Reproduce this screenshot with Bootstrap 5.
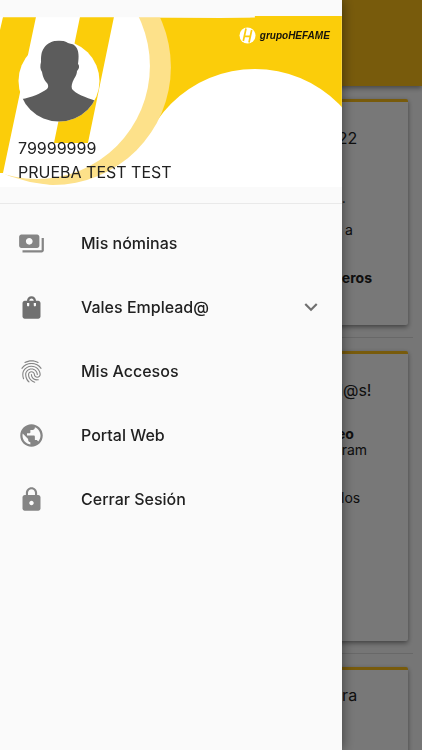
<!DOCTYPE html>
<html lang="es">
<head>
<meta charset="utf-8">
<meta name="viewport" content="width=device-width, initial-scale=1">
<title>grupoHEFAME</title>
<link href="https://cdn.jsdelivr.net/npm/bootstrap@5.3.0/dist/css/bootstrap.min.css" rel="stylesheet">
<style>
  body { font-family: Inter, "Liberation Sans", sans-serif; background: #f7f7f7; color: #212121; }
  .app-top { height: 86px; background: #fabe1b; box-shadow: 0 2px 5px rgba(0,0,0,.4); }
  .feed { padding: 13px 9px; }
  .feed hr { margin: 12px 0 13px; opacity: .14; }
  .news { margin: 0 5px; background: #fafafa; border: 0; border-top: 3px solid #fabe1b; border-radius: 2px; box-shadow: 0 2px 5px rgba(0,0,0,.45); }
  .news .card-body { padding: 24px 0 32px 81%; white-space: nowrap; font-size: 14px; line-height: 16px; }
  .news h2 { font-size: 16px; line-height: 24px; font-weight: 400; margin: 0; }
  .news p { margin: 0; }
  .news-a { min-height: 226px; }
  .news-b { min-height: 290px; }
  .news-c { min-height: 226px; }
  .news-c .card-body { padding-top: 13px; }
  .gap-a { padding-top: 40px; }
  .gap-b { padding-top: 16px; }
  .gap-c { padding-top: 32px; }
  .gap-d { padding-top: 24px; }
  .offcanvas-backdrop.show { opacity: .52; }
  .offcanvas.drawer { width: 81%; border: 0; background: #fafafa; color: #212121; box-shadow: 0 0 12px rgba(0,0,0,.5); }
  .banner { margin-top: 16px; padding: 24px 18px 3px; min-height: 171px; }
  .banner-art { width: 100%; height: 100%; }
  .banner-text { font-size: 16px; line-height: 24px; }
  .brand { font: italic bold 10px/16px "Liberation Sans", sans-serif; color: #17140a; margin: -13px -6px 0 0; gap: 4px; }
  .avatar { width: 82px; height: 82px; }
  .account { margin-top: 14px; }
  .drawer hr { margin: 16px 0 0; opacity: .08; }
  .menu { padding-top: 7px; }
  .menu-row { height: 64px; padding: 0 18px; gap: 36px; font-size: 16px; line-height: 24px; font-weight: 500; color: #212121; background: none; border: 0; text-align: left; }
  .menu-row .glyph { width: 27px; height: 27px; fill: #858585; flex: none; }
  .menu-row .dark { fill: #707070; }
  .menu-row .chev { width: 26px; height: 26px; fill: #707070; }
</style>
<script src="https://cdn.jsdelivr.net/npm/bootstrap@5.3.0/dist/js/bootstrap.bundle.min.js" defer></script>
</head>
<body>
<div class="vh-100 overflow-hidden">
<header class="app-top"></header>
<main class="feed">
  <article class="card news news-a">
    <div class="card-body">
      <h2>&nbsp;22</h2>
      <p class="gap-a">2.</p>
      <p class="gap-b">y a</p>
      <p class="gap-c fw-bold">neros</p>
    </div>
  </article>
  <hr>
  <article class="card news news-b">
    <div class="card-body">
      <h2>d@s!</h2>
      <p class="gap-d fw-bold">leo</p>
      <p>gram</p>
      <p class="gap-c">&nbsp;&nbsp;los</p>
    </div>
  </article>
  <hr>
  <article class="card news news-c">
    <div class="card-body">
      <h2>ara</h2>
    </div>
  </article>
</main>
</div>
<div class="offcanvas-backdrop show"></div>

<aside class="offcanvas offcanvas-start show drawer" tabindex="-1" data-bs-backdrop="false" aria-label="Menú">
  <div class="banner position-relative">
    <svg class="banner-art position-absolute top-0 start-0" viewBox="0 16 342 171" preserveAspectRatio="none" aria-hidden="true">
      <path fill="#fbcd0a" d="M0 17.500H60L90 17L150 17.500L220 18L255 17.500V16H342V187H0z"/>
      <path fill="#fff" d="M130 120H342V187H0V173H90z"/>
      <circle cx="255" cy="187.600" r="118.600" fill="#fff"/>
      <circle cx="53" cy="67" r="118" fill="#fde18a"/>
      <circle cx="37" cy="66" r="113" fill="#fff"/>
      <path fill="#fbcd0a" d="M3 17H36L3 173H0V30zM80 17H114L88 143H54z"/>
      <path fill="#fff" d="M0 173H3L9 176L30 182L53 185.500V187H0z"/>
      <path fill="#fafafa" d="M0 15H342V16H255L250 17.300H0z"/>
    </svg>
    <div class="position-relative d-flex justify-content-between align-items-start">
      <svg class="avatar" viewBox="0 0 82 82" role="img" aria-label="Usuario">
        <defs><clipPath id="face"><circle cx="41" cy="41" r="40.500"/></clipPath></defs>
        <circle cx="41" cy="41" r="40.500" fill="#fff"/>
        <path clip-path="url(#face)" fill="#5c5c5c" d="M41 .5C35 .5 29 3 26 8C23 12 23 17 23 22C22 26 22 29 24 32C25 38 27 41 29 43C31 46 30 48 29 49C24 53 12 58 4 59V82H78V61C67 57 58 54 54 49C53 46 54 43 56 39C58 36 59 33 59 31C61 29 62 26 60 24C61 17 61 11 58 7C55 3 52 4 50 3C47 1 44 .5 41 .5z"/>
      </svg>
      <div class="brand d-flex align-items-center">
        <svg width="17" height="17" viewBox="0 0 17 17" aria-hidden="true">
          <circle cx="8.500" cy="8.500" r="8" fill="#fff"/>
          <path fill="none" stroke="#fbcd0a" stroke-width="1.700" d="M7 1.500L4.300 14M12.700 3L10 15.500M6 9.400H10.800"/>
        </svg>
        <span>grupoHEFAME</span>
      </div>
    </div>
    <div class="account banner-text position-relative">
      <div>79999999</div>
      <div>PRUEBA TEST TEST</div>
    </div>
  </div>
  <hr>
  <nav class="menu d-flex flex-column">
    <a href="#" class="menu-row d-flex align-items-center text-decoration-none">
      <svg class="glyph" viewBox="0 0 24 24" aria-hidden="true"><path d="M19 14V6c0-1.100-.9-2-2-2H3c-1.100 0-2 .9-2 2v8c0 1.100.9 2 2 2h14c1.100 0 2-.9 2-2zm-9-1c-1.660 0-3-1.340-3-3s1.340-3 3-3 3 1.340 3 3-1.340 3-3 3zm13-6v11c0 1.100-.9 2-2 2H4v-2h17V7h2z"/></svg>
      <span>Mis nóminas</span>
    </a>
    <button type="button" class="menu-row d-flex align-items-center w-100" aria-expanded="false">
      <svg class="glyph dark" viewBox="0 0 24 24" aria-hidden="true"><path d="M18 6h-2c0-2.210-1.790-4-4-4S8 3.790 8 6H6c-1.100 0-2 .9-2 2v12c0 1.100.9 2 2 2h12c1.100 0 2-.9 2-2V8c0-1.100-.9-2-2-2zm-8 4c0 .55-.45 1-1 1s-1-.45-1-1V8h2v2zm2-6c1.100 0 2 .9 2 2h-4c0-1.100.9-2 2-2zm4 6c0 .55-.45 1-1 1s-1-.45-1-1V8h2v2z"/></svg>
      <span class="flex-grow-1">Vales Emplead@</span>
      <svg class="chev" viewBox="0 0 24 24" aria-hidden="true"><path d="M16.590 8.590L12 13.170 7.410 8.590 6 10l6 6 6-6z"/></svg>
    </button>
    <a href="#" class="menu-row d-flex align-items-center text-decoration-none">
      <svg class="glyph" viewBox="0 0 24 24" aria-hidden="true"><path d="M17.810 4.470c-.08 0-.16-.02-.23-.06C15.660 3.420 14 3 12.010 3c-1.980 0-3.860.47-5.570 1.410-.24.13-.54.04-.68-.2-.13-.24-.04-.55.2-.68C7.820 2.520 9.860 2 12.010 2c2.130 0 3.990.47 6.030 1.520.25.13.34.43.21.67-.09.18-.26.28-.44.28zM3.500 9.720c-.1 0-.2-.03-.29-.09-.23-.16-.28-.47-.12-.7.99-1.400 2.250-2.500 3.750-3.270C9.980 4.040 14 4.030 17.150 5.650c1.500.77 2.760 1.860 3.750 3.250.16.22.11.54-.12.7-.23.16-.54.11-.7-.12-.9-1.260-2.040-2.250-3.390-2.940-2.870-1.470-6.540-1.470-9.400.01-1.360.7-2.500 1.700-3.400 2.960-.08.14-.23.21-.39.21zm6.250 12.070c-.13 0-.26-.05-.35-.15-.87-.87-1.340-1.430-2.010-2.640-.69-1.230-1.050-2.730-1.050-4.340 0-2.970 2.540-5.390 5.660-5.390s5.660 2.420 5.660 5.390c0 .28-.22.5-.5.5s-.5-.22-.5-.5c0-2.420-2.090-4.390-4.660-4.390-2.570 0-4.660 1.970-4.660 4.390 0 1.440.32 2.770.93 3.850.64 1.150 1.080 1.640 1.850 2.420.19.2.19.51 0 .71-.11.1-.24.15-.37.15zm7.170-1.850c-1.190 0-2.240-.3-3.100-.89-1.490-1.010-2.380-2.650-2.380-4.390 0-.28.22-.5.5-.5s.5.22.5.5c0 1.410.72 2.740 1.940 3.560.71.48 1.540.71 2.540.71.24 0 .64-.03 1.040-.1.27-.05.53.13.58.41.05.27-.13.53-.41.58-.57.11-1.070.12-1.210.12zM14.910 22c-.04 0-.09-.01-.13-.02-1.590-.44-2.630-1.030-3.720-2.100-1.400-1.390-2.170-3.240-2.170-5.220 0-1.620 1.380-2.940 3.080-2.940 1.700 0 3.080 1.320 3.080 2.940 0 1.070.93 1.940 2.080 1.940s2.080-.87 2.080-1.940c0-3.770-3.250-6.830-7.250-6.830-2.840 0-5.440 1.580-6.610 4.030-.39.81-.59 1.760-.59 2.800 0 .78.07 2.010.67 3.610.1.26-.03.55-.29.64-.26.1-.55-.04-.64-.29-.49-1.310-.73-2.610-.73-3.960 0-1.200.23-2.290.68-3.240 1.330-2.790 4.280-4.600 7.510-4.600 4.550 0 8.250 3.510 8.250 7.830 0 1.620-1.380 2.940-3.080 2.940s-3.080-1.320-3.080-2.940c0-1.070-.93-1.940-2.080-1.940s-2.080.87-2.080 1.940c0 1.710.66 3.310 1.870 4.510.95.94 1.860 1.460 3.270 1.850.27.07.42.35.35.61-.05.23-.26.38-.47.38z"/></svg>
      <span>Mis Accesos</span>
    </a>
    <a href="#" class="menu-row d-flex align-items-center text-decoration-none">
      <svg class="glyph" viewBox="0 0 24 24" aria-hidden="true"><path d="M12 2C6.480 2 2 6.480 2 12s4.480 10 10 10 10-4.480 10-10S17.520 2 12 2zm-1 17.930c-3.950-.49-7-3.850-7-7.930 0-.62.08-1.210.21-1.790L9 15v1c0 1.100.9 2 2 2v1.930zm6.900-2.540c-.26-.81-1-1.390-1.900-1.390h-1v-3c0-.55-.45-1-1-1H8v-2h2c.55 0 1-.45 1-1V7h2c1.100 0 2-.9 2-2v-.41c2.930 1.190 5 4.060 5 7.410 0 2.080-.8 3.970-2.100 5.390z"/></svg>
      <span>Portal Web</span>
    </a>
    <a href="#" class="menu-row d-flex align-items-center text-decoration-none">
      <svg class="glyph" viewBox="0 0 24 24" aria-hidden="true"><path d="M18 8h-1V6c0-2.760-2.240-5-5-5S7 3.240 7 6v2H6c-1.100 0-2 .9-2 2v10c0 1.100.9 2 2 2h12c1.100 0 2-.9 2-2V10c0-1.100-.9-2-2-2zm-6 9c-1.100 0-2-.9-2-2s.9-2 2-2 2 .9 2 2-.9 2-2 2zm3.100-9H8.900V6c0-1.710 1.390-3.100 3.100-3.100 1.710 0 3.100 1.390 3.100 3.100v2z"/></svg>
      <span>Cerrar Sesión</span>
    </a>
  </nav>
</aside>
</body>
</html>
